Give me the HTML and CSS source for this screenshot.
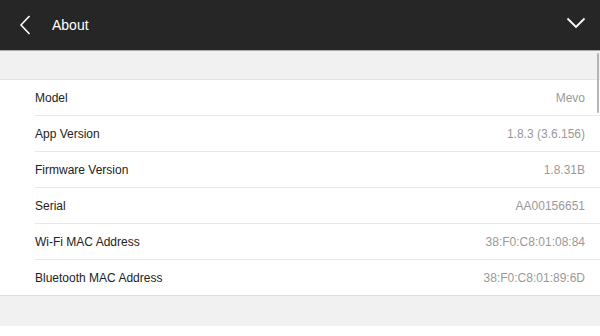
FILE: index.html
```html
<!DOCTYPE html>
<html lang="en">
<head>
    <meta charset="UTF-8">
    <meta name="viewport" content="width=device-width, initial-scale=1.0">
    <title>About</title>
    <link rel="stylesheet" href="styles.css">
</head>
<body class="page">
    <header class="top-bar">
        <button class="icon-button back-button" aria-label="Back">
            <svg width="12" height="20" viewBox="0 0 12 20">
                <path d="M10.5 1 L2 10 L10.5 19" fill="none" stroke="#fff" stroke-width="1.6"/>
            </svg>
        </button>
        <h1 class="top-title">About</h1>
        <button class="icon-button collapse-button" aria-label="Collapse">
            <svg width="20" height="12" viewBox="0 0 20 12">
                <path d="M1.5 1.5 L10 10 L18.5 1.5" fill="none" stroke="#fff" stroke-width="1.8"/>
            </svg>
        </button>
    </header>

    <main class="content">
        <div class="section-gap"></div>
        <ul class="info-list" id="info-list"></ul>
        <div class="section-gap"></div>
        <div class="scroll-indicator"></div>
    </main>

    <script>
        // Device details
        const details = [
            ['Model', 'Mevo'],
            ['App Version', '1.8.3 (3.6.156)'],
            ['Firmware Version', '1.8.31B'],
            ['Serial', 'AA00156651'],
            ['Wi-Fi MAC Address', '38:F0:C8:01:08:84'],
            ['Bluetooth MAC Address', '38:F0:C8:01:89:6D']
        ];

        const list = document.getElementById('info-list');

        details.forEach(([label, value]) => {
            const row = document.createElement('li');
            row.classList.add('info-row');

            const labelEl = document.createElement('span');
            labelEl.classList.add('info-label');
            labelEl.innerText = label;

            const valueEl = document.createElement('span');
            valueEl.classList.add('info-value');
            valueEl.innerText = value;

            row.appendChild(labelEl);
            row.appendChild(valueEl);
            list.appendChild(row);
        });
    </script>
</body>
</html>
```

FILE: styles.css
```css
.page {
    margin: 0;
    font-family: "Liberation Sans", Arial, sans-serif;
    background-color: #fff;
    height: 336px;
    overflow: hidden;
}

/* Top bar */
.top-bar {
    display: flex;
    align-items: center;
    height: 50px;
    background-color: #262626;
    border-bottom: 1px solid #a8a8a8;
}

.icon-button {
    display: flex;
    align-items: center;
    justify-content: center;
    background: none;
    border: none;
    padding: 0;
    cursor: pointer;
}

.back-button {
    width: 12px;
    height: 20px;
    margin-left: 19px;
    margin-top: 0;
}

.top-title {
    flex: 1;
    margin: 0 0 0 21px;
    color: #fff;
    font-size: 14px;
    font-weight: normal;
}

.collapse-button {
    width: 20px;
    height: 12px;
    margin-right: 14px;
    margin-top: -4px;
}

/* Content */
.content {
    position: relative;
}

.section-gap {
    height: 28px;
    background-color: #f1f1f1;
    border-bottom: 1px solid #e3e3e3;
}

.info-list + .section-gap {
    height: 30px;
    border-top: 1px solid #dedede;
    border-bottom: none;
}

.info-list {
    list-style: none;
    margin: 0;
    padding: 0 0 0 35px;
}

.info-row {
    display: flex;
    justify-content: space-between;
    align-items: center;
    height: 35px;
    padding-right: 15px;
    font-size: 12px;
    border-bottom: 1px solid #e8e8e8;
}

.info-row:last-child {
    border-bottom: none;
}

.info-label {
    color: #222;
}

.info-value {
    color: #999;
}

/* Scroll indicator over the right edge */
.scroll-indicator {
    position: absolute;
    top: 2px;
    right: 1px;
    width: 2px;
    height: 60px;
    border-radius: 1px;
    background-color: #b5b5b5;
}
```
